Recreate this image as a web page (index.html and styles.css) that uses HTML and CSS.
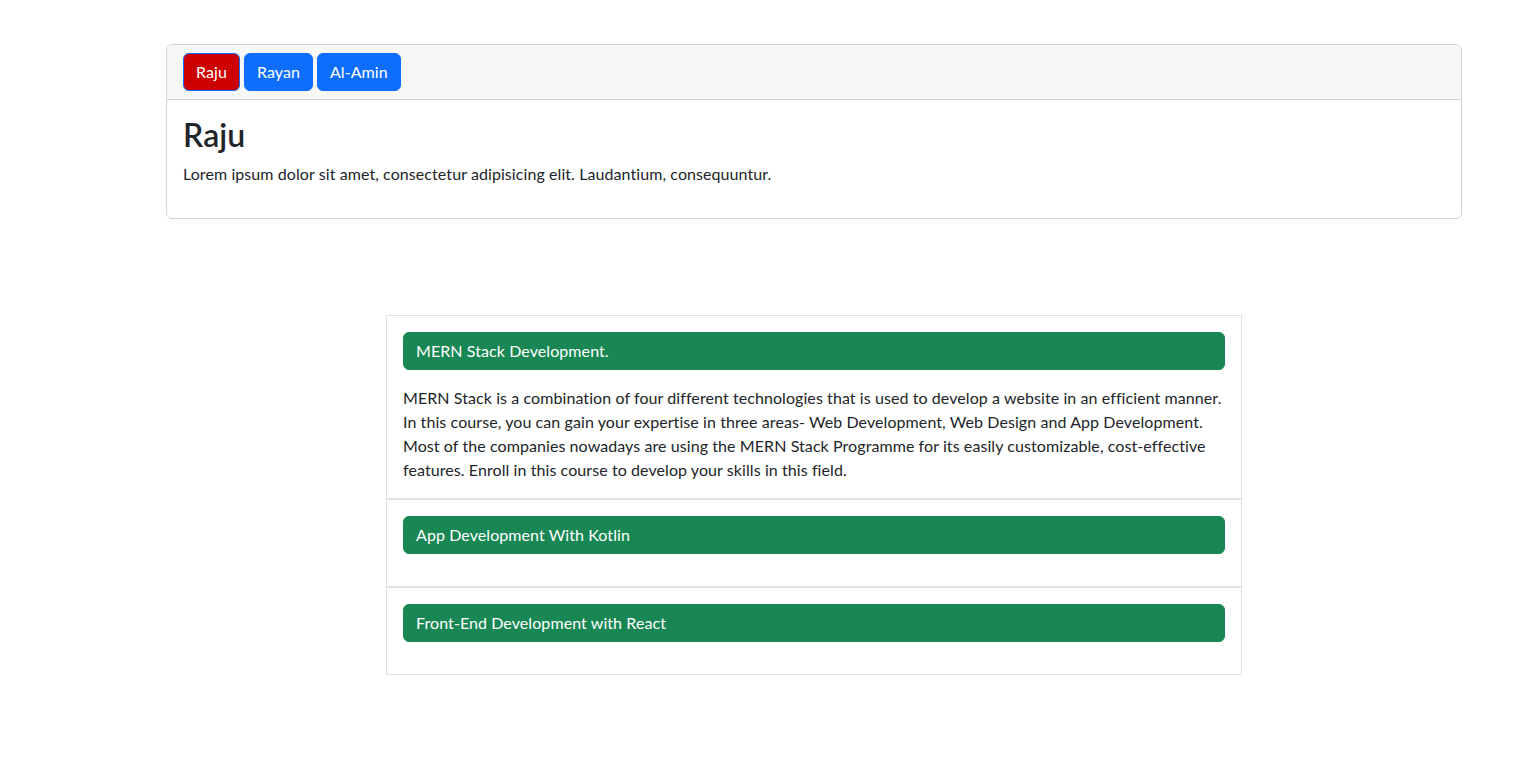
FILE: index.html
```html
<!DOCTYPE html>
<html lang="en">
<head>
<meta charset="utf-8">
<title>Tabs and Courses</title>
<link rel="stylesheet" href="styles.css">
</head>
<body>
  <div class="tab-card">
    <div class="tab-card-header">
      <button class="tab-btn tab-btn-active">Raju</button>
      <button class="tab-btn">Rayan</button>
      <button class="tab-btn">Al-Amin</button>
    </div>
    <div class="tab-card-body">
      <h2 class="tab-title">Raju</h2>
      <p class="tab-text">Lorem ipsum dolor sit amet, consectetur adipisicing elit. Laudantium, consequuntur.</p>
    </div>
  </div>

  <div class="courses">
    <div class="course">
      <button class="course-head">MERN Stack Development.</button>
      <p class="course-body">MERN Stack is a combination of four different technologies that is used to develop a website in an efficient manner. In this course, you can gain your expertise in three areas- Web Development, Web Design and App Development. Most of the companies nowadays are using the MERN Stack Programme for its easily customizable, cost-effective features. Enroll in this course to develop your skills in this field.</p>
    </div>
    <div class="course">
      <button class="course-head">App Development With Kotlin</button>
      <p class="course-body course-body-empty"></p>
    </div>
    <div class="course">
      <button class="course-head">Front-End Development with React</button>
      <p class="course-body course-body-empty"></p>
    </div>
  </div>
</body>
</html>
```
FILE: styles.css
```css
* {
  box-sizing: border-box;
}

body {
  margin: 0;
  font-family: Lato, "Open Sans", sans-serif;
  font-size: 16px;
  line-height: 1.5;
  letter-spacing: 0.08px;
  color: #212529;
  background: #fff;
}

.tab-card {
  margin: 44px 74px 0 166px;
  border: 1px solid #d5d5d5;
  border-radius: 6px;
  overflow: hidden;
}

.tab-card-header {
  display: flex;
  gap: 4px;
  padding: 8px 16px;
  background: #f7f7f7;
  border-bottom: 1px solid #d5d5d5;
}

.tab-btn {
  font-family: inherit;
  font-size: 16px;
  line-height: 24px;
  letter-spacing: inherit;
  padding: 6px 12px;
  border: 1px solid #0d6efd;
  border-radius: 6px;
  background: #0d6efd;
  color: #fff;
  cursor: pointer;
}

.tab-btn-active {
  background: #cc0000;
}

.tab-card-body {
  padding: 16px;
}

.tab-title {
  margin: 0 0 8px;
  font-size: 32px;
  font-weight: 600;
  line-height: 1.2;
}

.tab-text {
  margin: 0 0 16px;
}

.courses {
  margin: 96px 0 0 386px;
  width: 856px;
  border: 1px solid #dee2e6;
}

.course {
  padding: 16px;
}

.course + .course {
  border-top: 2px solid #dee2e6;
}

.course-head {
  display: block;
  width: 100%;
  text-align: left;
  font-family: inherit;
  font-size: 16px;
  line-height: 24px;
  letter-spacing: inherit;
  padding: 6px 12px;
  border: 1px solid #198754;
  border-radius: 6px;
  background: #198754;
  color: #fff;
}

.course-body {
  margin: 16px 0 0;
}

.course-body-empty {
  height: 0;
}
```
